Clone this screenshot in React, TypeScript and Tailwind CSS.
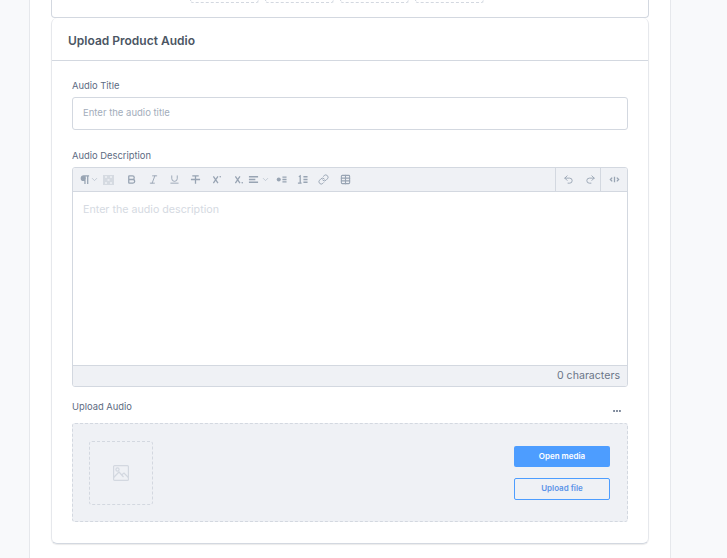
import { ChevronDown, Bold, Italic, Underline, Link, Table, Undo2, Redo2, Ellipsis } from 'lucide-react'

const font = { fontFamily: 'Inter, sans-serif' }
const gray = 'text-[#98a4b3]'

function ToolIcon({ icon: Icon, className = '', weight = 2 }: { icon: typeof Bold; className?: string; weight?: number }) {
  return <Icon size={11} strokeWidth={weight} className={`shrink-0 ${gray} ${className}`} />
}

// small toolbar glyphs lucide doesn't draw the same way
function Glyph({ d, className = '', dots = [] }: { d: string; className?: string; dots?: number[][] }) {
  return (
    <svg viewBox="0 0 12 12" width="11" height="11" fill="none" stroke="currentColor" strokeWidth="1.4" className={`shrink-0 ${gray} ${className}`}>
      <path d={d} />
      {dots.map(([x, y, r], i) => (
        <circle key={i} cx={x} cy={y} r={r} fill="currentColor" stroke="none" />
      ))}
    </svg>
  )
}

function Checker() {
  return (
    <svg viewBox="0 0 11 10" width="11" height="10" className="ml-[4px] shrink-0">
      <rect width="11" height="10" fill="#d5dae1" />
      <path d="M2 1h2v2H2zM7 1h2v2H7zM4.5 4h2v2h-2zM2 7h2v2H2zM7 7h2v2H7z" fill="#e8ebf0" />
    </svg>
  )
}

function Toolbar() {
  return (
    <div className="flex h-[24px] items-center border-b border-[#d3d8e0] bg-[#eff1f5]">
      <div className="flex flex-1 items-center pl-[6px]">
        <Glyph d="M6.5 2v9M9.5 2v9M11 2H5a2.5 2.5 0 0 0 0 5h1.5" dots={[[5, 4.5, 2.2]]} />
        <ChevronDown size={9} className="text-[#b6bfcb]" />
        <Checker />
        <ToolIcon icon={Bold} weight={2.8} className="ml-[12px]" />
        <ToolIcon icon={Italic} className="ml-[11px]" />
        <ToolIcon icon={Underline} className="ml-[10px]" />
        <Glyph d="M2.5 2h7M6 2v8.5M1 6h10" className="ml-[10px]" />
        <Glyph d="M1.5 2.5l5 7.5M6.5 2.5l-5 7.5" dots={[[9, 3, 0.9]]} className="ml-[11px]" />
        <Glyph d="M1.5 2.5l5 7.5M6.5 2.5l-5 7.5" dots={[[9, 9.5, 0.9]]} className="ml-[11px]" />
        <Glyph d="M1 3h10M1 6h7M1 9h10" className="ml-[3px]" />
        <ChevronDown size={9} className="ml-[2px] text-[#b6bfcb]" />
        <Glyph d="M7 3.5h4.5M7 6h4.5M7 8.5h4.5" dots={[[3, 6, 2.2]]} className="ml-[6px]" />
        <Glyph d="M2 3l1.5-1v8M1 10h4M7 3h4.5M7 6h4.5M7 9h4.5" className="ml-[10px]" />
        <ToolIcon icon={Link} className="ml-[10px]" />
        <ToolIcon icon={Table} weight={2.4} className="ml-[11px]" />
      </div>
      <div className="flex h-full w-[45px] items-center justify-center gap-[11px] border-l border-[#d3d8e0] pl-[3px]">
        <ToolIcon icon={Undo2} />
        <ToolIcon icon={Redo2} />
      </div>
      <div className="flex h-full w-[27px] items-center justify-center border-l border-[#d3d8e0]">
        <Glyph d="M3.5 4L1.5 6l2 2M8.5 4l2 2-2 2M6 3v6" />
      </div>
    </div>
  )
}

export default function App() {
  return (
    <div style={font} className="h-[558px] overflow-hidden bg-[#f8f9fb] pl-[29px]">
      <div className="h-full w-[642px] border-x border-[#e6e8ec] bg-white px-[21px]">
        <div className="flex h-[18px] gap-[6px] rounded-b-[4px] border border-t-0 border-[#d3d8e0] pl-[138px]">
          <div className="h-[3px] w-[69px] rounded-b-[3px] border border-t-0 border-dashed border-[#d3d8e0]" />
          <div className="h-[3px] w-[69px] rounded-b-[3px] border border-t-0 border-dashed border-[#d3d8e0]" />
          <div className="h-[3px] w-[69px] rounded-b-[3px] border border-t-0 border-dashed border-[#d3d8e0]" />
          <div className="h-[3px] w-[69px] rounded-b-[3px] border border-t-0 border-dashed border-[#d3d8e0]" />
        </div>

        <div className="h-[526px] rounded-[6px] border border-t-0 border-[#e6e8ec] border-b-[#d3d8e0] shadow-[0_1px_1px_rgba(0,0,0,0.08)]">
          <div className="flex h-[43px] items-center border-b border-[#d3d8e0] pl-[16px] pt-[3px]">
            <h2 className="text-[12px] font-semibold text-[#4b5563]">Upload Product Audio</h2>
          </div>

          <div className="px-[20px]">
            <label className="mt-[18px] block text-[9.4px] leading-[14px] text-[#5d6b82]">Audio Title</label>
            <div className="mt-[4px] flex h-[33px] items-center rounded-[3px] border border-[#d3d8e0] pl-[10px] text-[9.5px] text-[#a3adbb]">
              Enter the audio title
            </div>

            <label className="mt-[19px] block text-[9.4px] leading-[14px] text-[#5d6b82]">Audio Description</label>
            <div className="mt-[4px] overflow-hidden rounded-[3px] border border-[#d3d8e0]">
              <Toolbar />
              <div className="h-[174px] border-b border-[#d3d8e0] pl-[10px] pt-[11px] text-[10.7px] leading-[14px] text-[#d5dae2]">
                Enter the audio description
              </div>
              <div className="flex h-[20px] items-center justify-end bg-[#eff1f5] pr-[7px] text-[10.6px] text-[#6b7688]">
                0 characters
              </div>
            </div>

            <div className="mt-[12px] flex h-[15px] items-center justify-between">
              <label className="text-[9.4px] leading-[14px] text-[#5d6b82]">Upload Audio</label>
              <Ellipsis size={10} strokeWidth={3} className="mr-[6px] mt-[8px] text-[#5d6b82]" />
            </div>

            <div className="mt-[9px] flex h-[99px] items-center justify-between rounded-[3px] border border-dashed border-[#d3d8e0] bg-[#eff1f5] pl-[16px] pr-[17px]">
              <div className="flex h-[64px] w-[64px] items-center justify-center rounded-[3px] border border-dashed border-[#d3d8e0]">
                <svg viewBox="0 0 16 16" width="16" height="16" fill="none" stroke="#d3d8e0" strokeWidth="1.2">
                  <rect x="0.6" y="0.6" width="14.8" height="14.8" rx="1" />
                  <circle cx="4.5" cy="4.5" r="1.6" />
                  <path d="M0.6 12.5L6 7l4.5 5M8.5 10l2.5-2 4.4 4.5" />
                </svg>
              </div>
              <div className="flex flex-col gap-[11px]">
                <button className="h-[21px] w-[96px] rounded-[2px] bg-[#4d9dff] text-[8px] font-semibold text-white">
                  Open media
                </button>
                <button className="h-[22px] w-[96px] rounded-[2px] border border-[#4d9dff] pb-[1px] text-[8px] font-semibold text-[#5b93e8]">
                  Upload file
                </button>
              </div>
            </div>
          </div>
        </div>
      </div>
    </div>
  )
}
